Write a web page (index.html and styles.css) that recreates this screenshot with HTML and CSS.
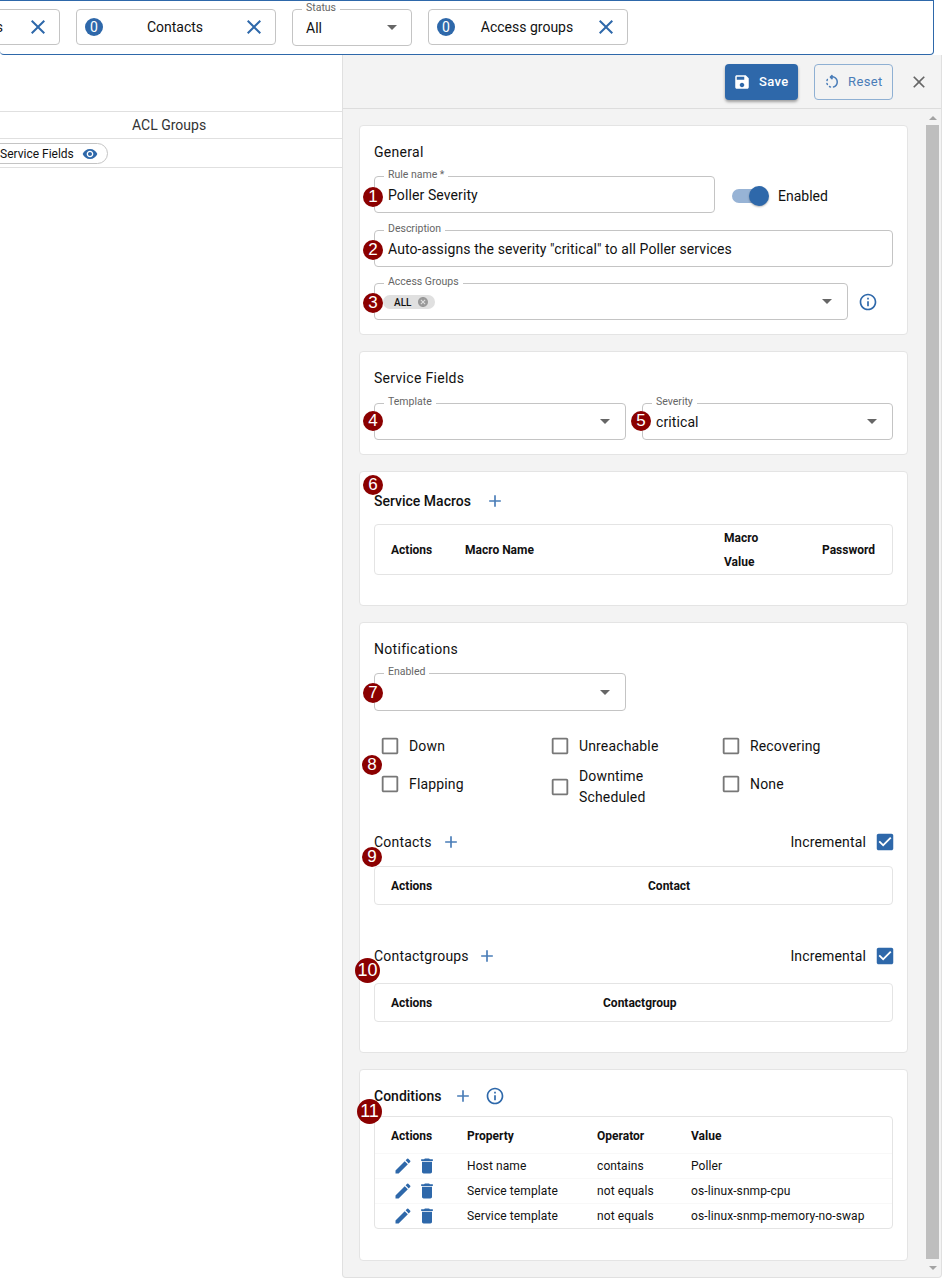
FILE: index.html
```html
<!DOCTYPE html>
<html>
<head>
    <title>Auto Discovery Rules</title>
    <link rel="stylesheet" href="styles.css">
</head>
<body>
    <svg class="defs" width="0" height="0">
        <symbol id="i-close" viewBox="0 0 24 24"><path d="M19 6.41 17.59 5 12 10.59 6.41 5 5 6.41 10.59 12 5 17.59 6.41 19 12 13.41 17.59 19 19 17.59 13.41 12z"/></symbol>
        <symbol id="i-save" viewBox="0 0 24 24"><path d="M17 3H5c-1.11 0-2 .9-2 2v14c0 1.1.89 2 2 2h14c1.1 0 2-.9 2-2V7l-4-4zm-5 16c-1.66 0-3-1.34-3-3s1.34-3 3-3 3 1.34 3 3-1.34 3-3 3zm3-10H5V5h10v4z"/></symbol>
        <symbol id="i-reset" viewBox="0 0 24 24"><path d="M6.56 7.98C6.1 7.52 5.31 7.6 5 8.17c-.28.51-.5 1.03-.67 1.58-.19.63.31 1.25.96 1.25h.01c.43 0 .82-.28.94-.7.12-.4.28-.79.48-1.17.22-.37.15-.84-.16-1.15zM5.31 13h-.02c-.65 0-1.15.62-.96 1.25.16.54.38 1.07.66 1.58.31.57 1.11.66 1.57.2.3-.31.38-.77.17-1.15-.2-.37-.36-.76-.48-1.16-.12-.44-.51-.72-.94-.72zm2.85 6.02c.51.28 1.04.5 1.59.66.62.18 1.24-.32 1.24-.96v-.03c0-.43-.28-.82-.7-.94-.4-.12-.78-.28-1.15-.48-.38-.21-.86-.14-1.16.17l-.03.03c-.45.45-.36 1.24.21 1.55zM13 4.07v-.66c0-.89-1.08-1.34-1.71-.71L9.17 4.83c-.4.4-.4 1.03 0 1.43l2.13 2.08c.63.62 1.7.17 1.7-.72V6.09c2.84.48 5 2.94 5 5.91 0 2.73-1.82 5.02-4.32 5.75-.41.12-.68.51-.68.94v.02c0 .65.61 1.14 1.23.96C17.57 18.71 20 15.64 20 12c0-4.08-3.05-7.44-7-7.93z"/></symbol>
        <symbol id="i-add" viewBox="0 0 24 24"><path d="M19 13h-6v6h-2v-6H5v-2h6V5h2v6h6v2z"/></symbol>
        <symbol id="i-info" viewBox="0 0 24 24"><path d="M11 7h2v2h-2zm0 4h2v6h-2zm1-9C6.48 2 2 6.48 2 12s4.48 10 10 10 10-4.48 10-10S17.52 2 12 2zm0 18c-4.41 0-8-3.59-8-8s3.59-8 8-8 8 3.59 8 8-3.59 8-8 8z"/></symbol>
        <symbol id="i-eye" viewBox="0 0 24 24"><path d="M12 4.5C7 4.5 2.73 7.61 1 12c1.73 4.39 6 7.5 11 7.5s9.27-3.11 11-7.5c-1.73-4.39-6-7.5-11-7.5zM12 17c-2.76 0-5-2.24-5-5s2.24-5 5-5 5 2.24 5 5-2.24 5-5 5zm0-8c-1.66 0-3 1.34-3 3s1.34 3 3 3 3-1.34 3-3-1.34-3-3-3z"/></symbol>
        <symbol id="i-cancel" viewBox="0 0 24 24"><path d="M12 2C6.47 2 2 6.47 2 12s4.47 10 10 10 10-4.47 10-10S17.53 2 12 2zm5 13.59L15.59 17 12 13.41 8.41 17 7 15.59 10.59 12 7 8.41 8.41 7 12 10.59 15.59 7 17 8.41 13.41 12 17 15.59z"/></symbol>
        <symbol id="i-box" viewBox="0 0 24 24"><path d="M19 5v14H5V5h14m0-2H5c-1.1 0-2 .9-2 2v14c0 1.1.9 2 2 2h14c1.1 0 2-.9 2-2V5c0-1.1-.9-2-2-2z"/></symbol>
        <symbol id="i-check" viewBox="0 0 24 24"><path d="M19 3H5c-1.11 0-2 .9-2 2v14c0 1.1.89 2 2 2h14c1.11 0 2-.89 2-2V5c0-1.11-.89-2-2-2zm-9 14l-5-5 1.41-1.41L10 14.17l7.59-7.59L19 8l-9 9z"/></symbol>
        <symbol id="i-edit" viewBox="0 0 24 24"><path d="M3 17.25V21h3.75L17.81 9.94l-3.75-3.75L3 17.25zM20.71 7.04c.39-.39.39-1.02 0-1.41l-2.34-2.34a.9959.9959 0 0 0-1.41 0l-1.83 1.83 3.75 3.75 1.83-1.83z"/></symbol>
        <symbol id="i-delete" viewBox="0 0 24 24"><path d="M6 19c0 1.1.9 2 2 2h8c1.1 0 2-.9 2-2V7H6v12zM19 4h-3.5l-1-1h-5l-1 1H5v2h14V4z"/></symbol>
    </svg>

    <div class="filters">
        <div class="filter filter-cut">
            <span class="filter-name">Contactgroups</span>
            <svg class="filter-x"><use href="#i-close"/></svg>
        </div>
        <div class="filter filter-contacts">
            <span class="count">0</span>
            <span class="filter-name">Contacts</span>
            <svg class="filter-x"><use href="#i-close"/></svg>
        </div>
        <div class="status">
            <span class="status-label">Status</span>
            <span>All</span>
            <span class="caret"></span>
        </div>
        <div class="filter filter-access">
            <span class="count">0</span>
            <span class="filter-name">Access groups</span>
            <svg class="filter-x"><use href="#i-close"/></svg>
        </div>
    </div>

    <div class="main">
        <div class="list">
            <div class="list-head">ACL Groups</div>
            <div class="list-row">
                <span class="pill">Service Fields <svg class="pill-eye"><use href="#i-eye"/></svg></span>
            </div>
        </div>

        <div class="drawer">
            <div class="drawer-head">
                <button class="btn-save"><svg class="btn-icon"><use href="#i-save"/></svg>Save</button>
                <button class="btn-reset"><svg class="btn-icon"><use href="#i-reset"/></svg>Reset</button>
                <svg class="drawer-close"><use href="#i-close"/></svg>
            </div>

            <div class="drawer-body">
                <div class="cards">
                    <section class="card card-general">
                        <h3>General</h3>
                        <div class="row row-first">
                            <div class="field field-name">
                                <span class="badge badge-1">1</span>
                                <label>Rule name *</label>
                                <span>Poller Severity</span>
                            </div>
                            <div class="toggle"><span class="toggle-track"><span class="toggle-knob"></span></span>Enabled</div>
                        </div>
                        <div class="field">
                            <span class="badge">2</span>
                            <label>Description</label>
                            <span>Auto-assigns the severity "critical" to all Poller services</span>
                        </div>
                        <div class="row">
                            <div class="field field-groups">
                                <span class="badge">3</span>
                                <label>Access Groups</label>
                                <span class="tag">ALL <svg class="tag-x"><use href="#i-cancel"/></svg></span>
                                <span class="caret"></span>
                            </div>
                            <svg class="icon-info icon-info-groups"><use href="#i-info"/></svg>
                        </div>
                    </section>

                    <section class="card card-service">
                        <h3>Service Fields</h3>
                        <div class="row row-half">
                            <div class="field">
                                <span class="badge badge-low">4</span>
                                <label>Template</label>
                                <span class="caret"></span>
                            </div>
                            <div class="field">
                                <span class="badge badge-low">5</span>
                                <label>Severity</label>
                                <span>critical</span>
                                <span class="caret"></span>
                            </div>
                        </div>
                    </section>

                    <section class="card card-macros">
                        <span class="badge badge-6">6</span>
                        <div class="title-row title-strong">Service Macros <svg class="icon-add"><use href="#i-add"/></svg></div>
                        <div class="table-box">
                            <table class="table-macros">
                                <tr><th class="col-a">Actions</th><th class="col-b">Macro Name</th><th class="col-c">Macro<br>Value</th><th>Password</th></tr>
                            </table>
                        </div>
                    </section>

                    <section class="card card-notif">
                        <h3>Notifications</h3>
                        <div class="field field-enabled">
                            <span class="badge">7</span>
                            <label>Enabled</label>
                            <span class="caret"></span>
                        </div>
                        <div class="checks">
                            <span class="badge badge-8">8</span>
                            <div class="check"><svg class="box"><use href="#i-box"/></svg>Down</div>
                            <div class="check"><svg class="box"><use href="#i-box"/></svg>Unreachable</div>
                            <div class="check"><svg class="box"><use href="#i-box"/></svg>Recovering</div>
                            <div class="check"><svg class="box"><use href="#i-box"/></svg>Flapping</div>
                            <div class="check check-downtime"><svg class="box"><use href="#i-box"/></svg><span class="check-wrap">Downtime Scheduled</span></div>
                            <div class="check"><svg class="box"><use href="#i-box"/></svg>None</div>
                        </div>
                        <div class="title-row title-contacts">
                            <span class="badge badge-9">9</span>
                            Contacts <svg class="icon-add"><use href="#i-add"/></svg>
                            <span class="incremental">Incremental <svg class="box box-on"><use href="#i-check"/></svg></span>
                        </div>
                        <div class="table-box">
                            <table class="table-contacts">
                                <tr><th class="col-contact">Actions</th><th>Contact</th></tr>
                            </table>
                        </div>
                        <div class="title-row title-groups">
                            <span class="badge badge-wide badge-10">10</span>
                            Contactgroups <svg class="icon-add"><use href="#i-add"/></svg>
                            <span class="incremental">Incremental <svg class="box box-on"><use href="#i-check"/></svg></span>
                        </div>
                        <div class="table-box">
                            <table class="table-contacts">
                                <tr><th class="col-group">Actions</th><th>Contactgroup</th></tr>
                            </table>
                        </div>
                    </section>

                    <section class="card card-conditions">
                        <span class="badge badge-wide badge-11">11</span>
                        <div class="title-row title-strong">Conditions <svg class="icon-add"><use href="#i-add"/></svg><svg class="icon-info"><use href="#i-info"/></svg></div>
                        <div class="table-box">
                            <table class="table-conditions">
                                <tr><th class="col-d">Actions</th><th class="col-e">Property</th><th class="col-f">Operator</th><th>Value</th></tr>
                                <tr>
                                    <td class="actions"><svg class="act"><use href="#i-edit"/></svg><svg class="act"><use href="#i-delete"/></svg></td>
                                    <td>Host name</td><td>contains</td><td>Poller</td>
                                </tr>
                                <tr>
                                    <td class="actions"><svg class="act"><use href="#i-edit"/></svg><svg class="act"><use href="#i-delete"/></svg></td>
                                    <td>Service template</td><td>not equals</td><td>os-linux-snmp-cpu</td>
                                </tr>
                                <tr>
                                    <td class="actions"><svg class="act"><use href="#i-edit"/></svg><svg class="act"><use href="#i-delete"/></svg></td>
                                    <td>Service template</td><td>not equals</td><td>os-linux-snmp-memory-no-swap</td>
                                </tr>
                            </table>
                        </div>
                    </section>
                </div>

                <div class="scrollbar">
                    <span class="arrow-up"></span>
                    <div class="thumb"></div>
                    <span class="arrow-down"></span>
                </div>
            </div>
        </div>
    </div>
</body>
</html>
```

FILE: styles.css
```css
* {
    box-sizing: border-box;
}

html, body {
    height: 100%;
}

body {
    margin: 0;
    overflow: hidden;
    font-family: Roboto, Arial, sans-serif;
    font-size: 14px;
    color: #111;
    background-color: #fff;
}

svg {
    fill: currentColor;
    flex: none;
}

.defs {
    position: absolute;
}

/* filter bar */
.filters {
    display: flex;
    align-items: flex-start;
    gap: 16px;
    width: 934px;
    height: 55px;
    padding-top: 8px;
    border: 1px solid #2e68aa;
    border-left: none;
    border-radius: 0 0 4px 4px;
    overflow: hidden;
}

.filter {
    display: flex;
    align-items: center;
    height: 36px;
    padding: 0 9px 0 8px;
    border: 1px solid #c4c4c4;
    border-radius: 4px;
    flex: none;
}

.filter-cut {
    width: 240px;
    margin-left: -180px;
}

.filter-cut .filter-name {
    padding: 0 23px 0 0;
    text-align: right;
    white-space: nowrap;
}

.filter-contacts {
    width: 200px;
}

.filter-access {
    width: 200px;
}

.filter-name {
    flex: 1;
    padding-left: 5px;
    text-align: center;
}

.filter-x {
    width: 24px;
    height: 24px;
    color: #2e68aa;
}

.count {
    width: 18px;
    height: 18px;
    border-radius: 50%;
    background-color: #2e68aa;
    color: #fff;
    font-size: 14px;
    line-height: 18px;
    text-align: center;
}

.status {
    position: relative;
    display: flex;
    align-items: center;
    justify-content: space-between;
    width: 120px;
    height: 37px;
    padding: 0 14px 0 13px;
    border: 1px solid #c4c4c4;
    border-radius: 4px;
}

.status-label {
    position: absolute;
    top: -9px;
    left: 9px;
    padding: 0 4px;
    background-color: #fff;
    color: #666;
    font-size: 10.5px;
    line-height: 14px;
}

.caret {
    width: 0;
    height: 0;
    border-left: 5px solid transparent;
    border-right: 5px solid transparent;
    border-top: 5px solid #666;
}

/* main area */
.main {
    display: flex;
    height: 1223px;
}

.list {
    width: 342px;
    padding-top: 56px;
    flex: none;
}

.list-head {
    height: 28px;
    padding-left: 132px;
    border-top: 1px solid #e0e0e0;
    border-bottom: 1px solid #e0e0e0;
    line-height: 26px;
    color: #333;
}

.list-row {
    height: 29px;
    border-bottom: 1px solid #e0e0e0;
    padding-top: 4px;
    overflow: hidden;
}

.pill {
    display: inline-flex;
    align-items: center;
    gap: 8px;
    height: 21px;
    width: 129px;
    margin-left: -21px;
    padding-left: 20px;
    border: 1px solid #c4c4c4;
    border-radius: 11px;
    font-size: 12px;
}

.pill-eye {
    width: 16px;
    height: 16px;
    color: #2e68aa;
}

/* drawer */
.drawer {
    flex: 1;
    display: flex;
    flex-direction: column;
    background-color: #f3f3f3;
    border: 1px solid #e0e0e0;
    border-top: none;
    border-radius: 0 0 4px 4px;
}

.drawer-head {
    display: flex;
    align-items: center;
    justify-content: flex-end;
    height: 54px;
    padding: 0 12px 0 0;
    border-bottom: 1px solid #ddd;
    flex: none;
}

.btn-save, .btn-reset {
    display: flex;
    align-items: center;
    height: 36px;
    border-radius: 4px;
    font-family: inherit;
    font-size: 13px;
    font-weight: 500;
    letter-spacing: 0.4px;
}

.btn-save {
    width: 73px;
    padding: 0 0 0 8px;
    gap: 8px;
    border: none;
    background-color: #2e68aa;
    color: #fff;
    box-shadow: 0 2px 3px rgba(0, 0, 0, 0.35);
}

.btn-reset {
    width: 79px;
    margin: 0 16px;
    padding: 0 0 0 8px;
    gap: 7px;
    border: 1px solid #8fb0d3;
    background-color: transparent;
    color: #4a7db8;
    font-weight: 400;
}

.btn-icon {
    width: 18px;
    height: 18px;
}

.drawer-close {
    width: 20px;
    height: 20px;
    color: #666;
}

.drawer-body {
    flex: 1;
    display: flex;
    min-height: 0;
}

.cards {
    width: 565px;
    padding: 16px 0 0 16px;
    display: flex;
    flex-direction: column;
    gap: 16px;
    flex: none;
}

/* scrollbar */
.scrollbar {
    width: 13px;
    margin-left: 18px;
    padding-top: 7px;
    display: flex;
    flex-direction: column;
    align-items: center;
}

.thumb {
    width: 13px;
    height: 1134px;
    margin: 5px 0 4px;
    background-color: #bebebe;
}

.arrow-up, .arrow-down {
    width: 0;
    height: 0;
    border-left: 4px solid transparent;
    border-right: 4px solid transparent;
}

.arrow-up {
    border-bottom: 4px solid #a3a3a3;
}

.arrow-down {
    margin-top: 3px;
    border-top: 4px solid #a3a3a3;
}

/* cards */
.card {
    position: relative;
    padding: 0 14px;
    background-color: #fff;
    border: 1px solid #e4e4e4;
    border-radius: 4px;
}

.card-general {
    height: 210px;
}

.card-service {
    height: 104px;
}

.card-macros {
    height: 135px;
    padding-top: 17px;
}

.card-notif {
    height: 431px;
}

.card-conditions {
    height: 192px;
    padding-top: 14px;
}

h3 {
    margin: 0;
    padding-top: 17px;
    height: 50px;
    font-size: 14px;
    font-weight: 400;
    line-height: 18px;
    letter-spacing: 0.3px;
}

.row {
    display: flex;
    align-items: center;
}

.row-first .field {
    margin-bottom: 17px;
}

.row-half {
    gap: 16px;
    margin-top: 1px;
}

.row-half .field {
    flex: 1;
}

.row-half .field:first-child {
    flex: none;
    width: 252px;
}

/* outlined fields */
.field {
    position: relative;
    display: flex;
    align-items: center;
    justify-content: space-between;
    height: 37px;
    margin-bottom: 16px;
    padding: 0 15px 0 13px;
    border: 1px solid #c4c4c4;
    border-radius: 4px;
    letter-spacing: 0.1px;
}

.field label {
    position: absolute;
    top: -9px;
    left: 9px;
    padding: 0 4px;
    background-color: #fff;
    color: #666;
    font-size: 10.5px;
    line-height: 14px;
    letter-spacing: 0;
}

.field .caret {
    margin-left: auto;
}

.field-name {
    width: 341px;
}

.field-groups {
    width: 474px;
    padding-left: 8px;
}

.field-enabled {
    width: 252px;
    height: 38px;
    margin-bottom: 0;
}

.toggle {
    display: flex;
    align-items: center;
    gap: 12px;
    margin: 0 0 15px 17px;
}

.toggle-track {
    position: relative;
    width: 34px;
    height: 14px;
    border-radius: 7px;
    background-color: #97b3d5;
}

.toggle-knob {
    position: absolute;
    top: -3px;
    right: -3px;
    width: 20px;
    height: 20px;
    border-radius: 50%;
    background-color: #2e68aa;
    box-shadow: 0 1px 2px rgba(0, 0, 0, 0.3);
}

.tag {
    display: flex;
    align-items: center;
    gap: 6px;
    height: 14px;
    margin-top: 1px;
    padding: 0 6px 0 11px;
    border-radius: 7px;
    background-color: #e0e0e0;
    font-size: 10px;
    font-weight: 500;
    letter-spacing: 0;
}

.tag-x {
    width: 12px;
    height: 12px;
    color: #999;
}

.icon-info {
    width: 20px;
    height: 20px;
    color: #2e68aa;
}

.icon-info-groups {
    margin: 0 0 16px 10px;
}

.icon-add {
    width: 20px;
    height: 20px;
    margin-left: 8px;
    color: #4a7db8;
}

/* badges over the fields */
.badge {
    position: absolute;
    top: 9px;
    left: -12px;
    width: 20px;
    height: 20px;
    border-radius: 50%;
    background-color: #8b0000;
    color: #fff;
    font-family: "Liberation Sans", Arial, sans-serif;
    font-size: 17px;
    line-height: 20px;
    text-align: center;
    letter-spacing: 0;
    font-weight: 400;
}

.badge-wide {
    width: 25px;
    height: 25px;
    line-height: 25px;
    font-size: 18px;
}

.badge-1 {
    top: 10px;
}

.badge-low {
    top: 7px;
}

.badge-6 {
    top: 3px;
    left: 3px;
}

.badge-8 {
    top: 28px;
    left: -12px;
}

.badge-9 {
    top: 17px;
    left: -12px;
}

.badge-10 {
    top: 14px;
    left: -19px;
}

.badge-11 {
    top: 29px;
    left: -3px;
}

/* titles above tables */
.title-row {
    position: relative;
    display: flex;
    align-items: center;
    height: 24px;
    letter-spacing: 0.2px;
}

.title-strong {
    font-weight: 500;
    letter-spacing: 0;
}

.card-macros .icon-add {
    margin-left: 14px;
}

.card-conditions .icon-add {
    margin-left: 11px;
}

.title-row .icon-info {
    margin-left: 12px;
}

.title-contacts {
    margin-top: 27px;
}

.title-contacts .icon-add {
    margin-left: 9px;
}

.title-groups {
    margin-top: 39px;
}

.incremental {
    display: flex;
    align-items: center;
    gap: 8px;
    margin-left: auto;
    margin-right: -3px;
    letter-spacing: 0.15px;
}

/* tables */
.table-box {
    margin-top: 12px;
    border: 1px solid #e4e4e4;
    border-radius: 4px;
    overflow: hidden;
}

.card-macros .table-box {
    margin-top: 11px;
}

.title-groups + .table-box {
    margin-top: 15px;
}

.card-conditions .table-box {
    margin-top: 8px;
}

table {
    width: 100%;
    border-collapse: collapse;
    table-layout: fixed;
    font-size: 12px;
}

th {
    padding: 0 0 0 16px;
    text-align: left;
    font-weight: 700;
    line-height: 24px;
    vertical-align: middle;
}

td {
    padding: 0 0 0 16px;
    border-top: 1px solid #f8f8f8;
    height: 25px;
    letter-spacing: 0.1px;
}

.table-macros th {
    height: 49px;
}

.table-contacts th {
    height: 37px;
}

.table-conditions th {
    height: 36px;
    padding-top: 2px;
}

.col-a { width: 74px; }
.col-b { width: 259px; }
.col-c { width: 98px; }
.col-contact { width: 257px; }
.col-group { width: 212px; }
.col-d { width: 76px; }
.col-e { width: 130px; }
.col-f { width: 94px; }

.actions {
    padding-left: 16px;
    white-space: nowrap;
    color: #2e68aa;
    font-size: 0;
}

.act {
    width: 20px;
    height: 20px;
    margin-left: 2px;
    margin-right: 2px;
    vertical-align: middle;
}

/* checkboxes */
.checks {
    position: relative;
    display: grid;
    grid-template-columns: 170px 171px 1fr;
    grid-template-rows: 38px 38px;
    align-items: center;
    margin-top: 16px;
    padding-left: 5px;
}

.check {
    display: flex;
    align-items: center;
    gap: 8px;
    letter-spacing: 0.15px;
}

.check-downtime {
    margin-top: 5px;
}

.check-wrap {
    width: 80px;
    line-height: 21px;
}

.box {
    width: 22px;
    height: 22px;
    color: #777;
}

.box-on {
    color: #2e68aa;
}
```
